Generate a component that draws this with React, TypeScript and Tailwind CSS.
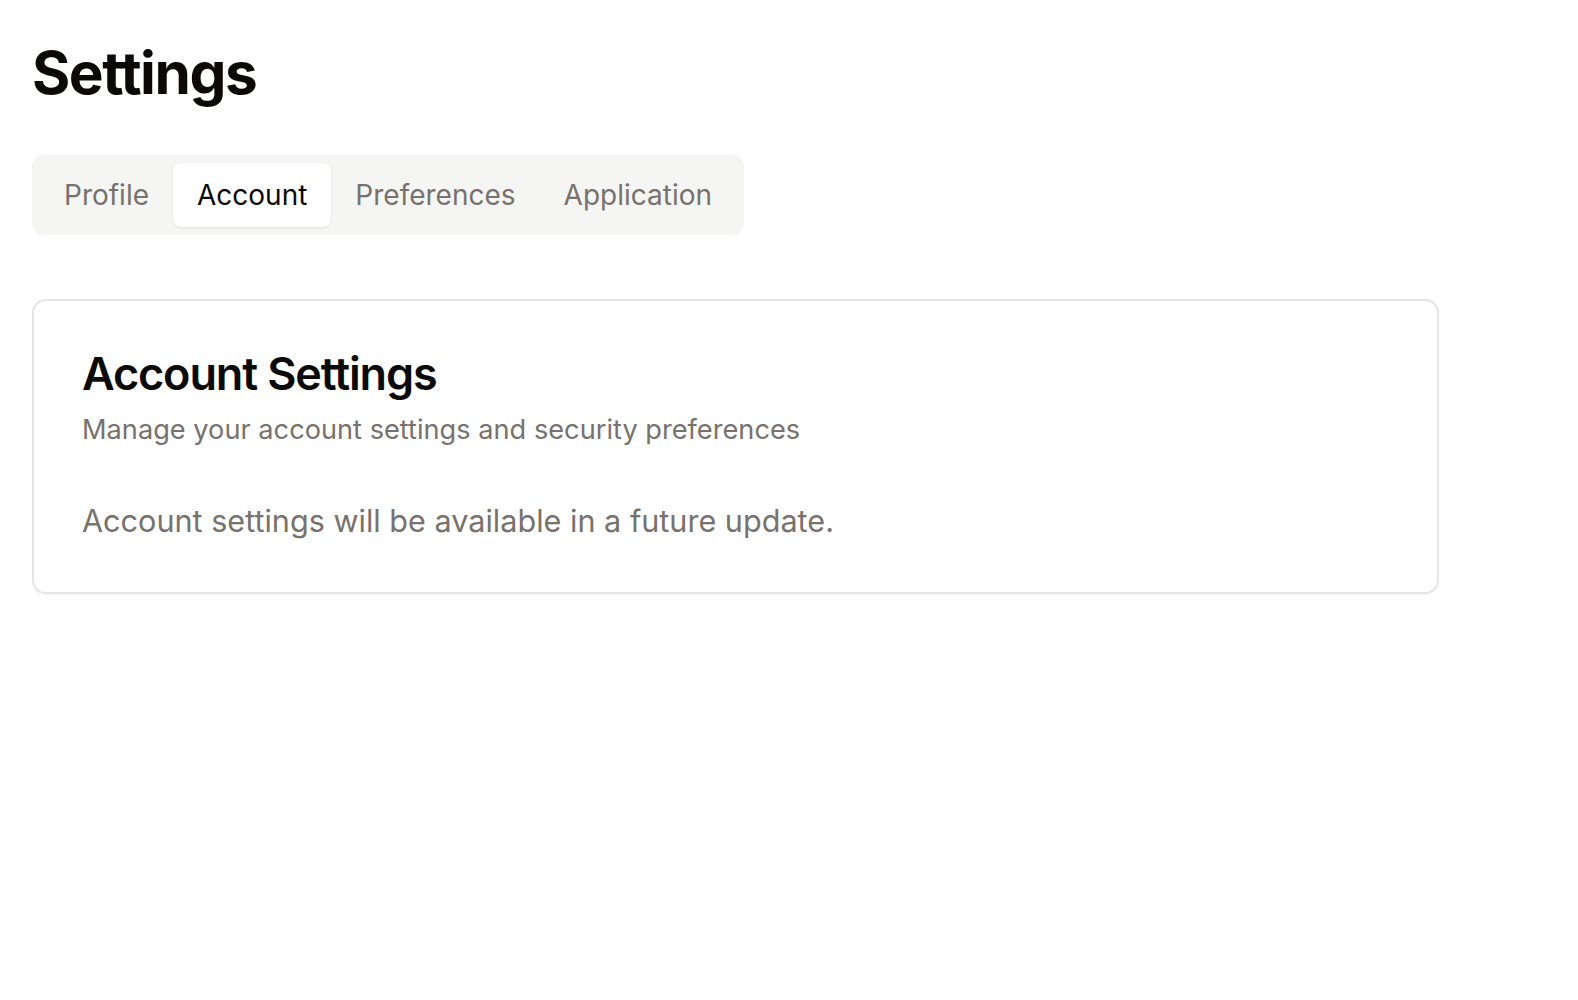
import React from "react";

const tabs = ["Profile", "Account", "Preferences", "Application"];

export default function App() {
  const active = "Account";
  return (
    <div className="min-h-screen bg-white px-8 pt-[38px] text-[#0c0a09]" style={{ fontFamily: 'Inter, "Noto Sans", sans-serif' }}>
      <h1 className="text-[58.5px] font-bold leading-[1.2] tracking-[-0.025em]">Settings</h1>
      <div className="mt-[47px] inline-flex h-[80px] items-center rounded-[12px] bg-[#f5f5f4] p-2">
        {tabs.map((t) => (
          <div
            key={t}
            className={
              t === active
                ? "flex h-full items-center rounded-[8px] bg-white px-[24px] text-[28px] text-[#0c0a09] shadow-[0_1px_3px_rgba(0,0,0,0.08)]"
                : "flex h-full items-center rounded-[8px] px-[24px] text-[28px] text-[#78716c]"
            }
          >
            {t}
          </div>
        ))}
      </div>
      <div className="mt-[64px] w-[1407px] rounded-[14px] border-2 border-[#e7e5e4] px-[48px] pt-[46px] pb-[49px] shadow-[0_1px_2px_rgba(0,0,0,0.05)]">
        <h2 className="text-[45px] font-semibold leading-[1.2] tracking-[-0.025em]">Account Settings</h2>
        <p className="mt-[10px] text-[27.2px] leading-[1.4] text-[#78716c]">
          Manage your account settings and security preferences
        </p>
        <p className="mt-[51px] text-[30.6px] leading-[1.4] text-[#78716c]">
          Account settings will be available in a future update.
        </p>
      </div>
    </div>
  );
}
